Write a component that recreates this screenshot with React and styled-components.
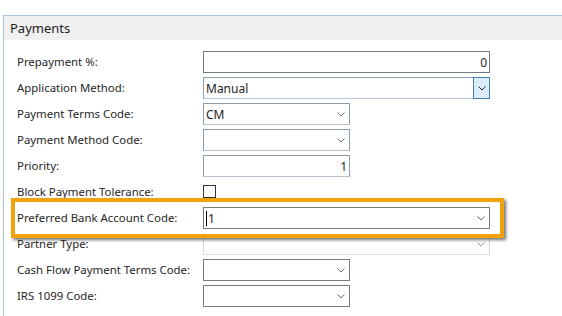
import React from "react";
import styled, { createGlobalStyle } from "styled-components";

const Global = createGlobalStyle`
  html, body { margin: 0; padding: 0; background: #ffffff; }
  body {
    font-family: "Noto Sans", "Open Sans", "DejaVu Sans", sans-serif;
    color: #1e1e1e;
    width: 562px;
    height: 316px;
    overflow: hidden;
  }
`;

const Panel = styled.section`
  margin: 15px 0 0 3px;
  border-top: 1px solid #a9c3e2;
  border-left: 1px solid #a9c3e2;
  height: 300px;
`;

const Header = styled.div`
  height: 24px;
  background: #f0f0f0;
  display: flex;
  align-items: center;
  padding-left: 6px;
  font-size: 13px;
  color: #1e1e1e;
`;

const Form = styled.div`
  display: grid;
  grid-template-columns: 186px auto;
  grid-auto-rows: 22px;
  row-gap: 4px;
  padding: 11px 0 0 13px;
  align-items: center;
`;

const Label = styled.div`
  font-size: 11.4px;
  line-height: 22px;
  white-space: nowrap;
  color: #262626;
`;

const Field = styled.div`
  position: relative;
  box-sizing: border-box;
  width: ${(p) => (p.$wide ? "287px" : "147px")};
  height: 22px;
  border: 1px solid ${(p) => (p.$disabled ? "#cfd8e2" : p.$combo ? "#8a9cb0" : "#7a7a7a")};
  border-bottom-color: ${(p) => (p.$disabled ? "#dde3ea" : p.$combo ? "#b5c3d2" : "#7a7a7a")};
  background: #fff;
  display: flex;
  align-items: center;
  justify-content: ${(p) => (p.$right ? "flex-end" : "flex-start")};
  padding: 0 2px;
  font-size: 12px;
  color: #1e1e1e;
`;

const Chevron = styled.svg`
  position: absolute;
  right: 4px;
  top: 8px;
  width: 8px;
  height: 5px;
`;

const DropButton = styled.div`
  position: absolute;
  right: -1px;
  top: -1px;
  width: 17px;
  height: 22px;
  box-sizing: border-box;
  border: 1px solid #3c7fb1;
  background: #dcecfc;
  display: flex;
  align-items: center;
  justify-content: center;
`;

const Checkbox = styled.div`
  width: 13px;
  height: 13px;
  box-sizing: border-box;
  border: 1px solid #333;
  background: #fff;
  margin-top: 4px;
  align-self: start;
`;

const HighlightCell = styled.div`
  position: relative;
`;

const Highlight = styled.div`
  position: absolute;
  left: -6px;
  top: -9px;
  width: 493px;
  height: 40px;
  box-sizing: border-box;
  border: 4px solid #f2a20b;
  box-shadow: 2px 2px 3px rgba(0, 0, 0, 0.55);
  pointer-events: none;
  z-index: 2;
`;

const HighlightFill = styled.div`
  position: absolute;
  left: -6px;
  top: -9px;
  width: 493px;
  height: 40px;
  background: #fff;
  z-index: 1;
`;

const Content = styled.div`
  position: relative;
  z-index: 3;
`;

const Caret = styled.span`
  display: inline-block;
  width: 1px;
  height: 15px;
  background: #000;
  margin-right: 1px;
`;

const Chev = ({ color = "#6b6b6b" }) => (
  <Chevron viewBox="0 0 8 5">
    <path d="M0.5 0.5 L4 4 L7.5 0.5" fill="none" stroke={color} strokeWidth="1" />
  </Chevron>
);

export default function App() {
  return (
    <>
      <Global />
      <Panel>
        <Header>Payments</Header>
        <Form>
          <Label>Prepayment %:</Label>
          <Field $wide $right>0</Field>

          <Label>Application Method:</Label>
          <Field $wide $combo>
            Manual
            <DropButton>
              <svg width="8" height="5" viewBox="0 0 8 5">
                <path d="M0.5 0.5 L4 4 L7.5 0.5" fill="none" stroke="#1e1e1e" strokeWidth="1" />
              </svg>
            </DropButton>
          </Field>

          <Label>Payment Terms Code:</Label>
          <Field $combo>
            CM
            <Chev />
          </Field>

          <Label>Payment Method Code:</Label>
          <Field $combo>
            <Chev />
          </Field>

          <Label>Priority:</Label>
          <Field $combo $right>1</Field>

          <Label>Block Payment Tolerance:</Label>
          <Checkbox />

          <HighlightCell>
            <HighlightFill />
            <Highlight />
            <Content>
              <Label>Preferred Bank Account Code:</Label>
            </Content>
          </HighlightCell>
          <Content>
            <Field $wide>
              <Caret />1
              <Chev />
            </Field>
          </Content>

          <Label>Partner Type:</Label>
          <Field $wide $disabled>
            <Chev color="#9a9a9a" />
          </Field>

          <Label>Cash Flow Payment Terms Code:</Label>
          <Field>
            <Chev />
          </Field>

          <Label>IRS 1099 Code:</Label>
          <Field>
            <Chev />
          </Field>
        </Form>
      </Panel>
    </>
  );
}
